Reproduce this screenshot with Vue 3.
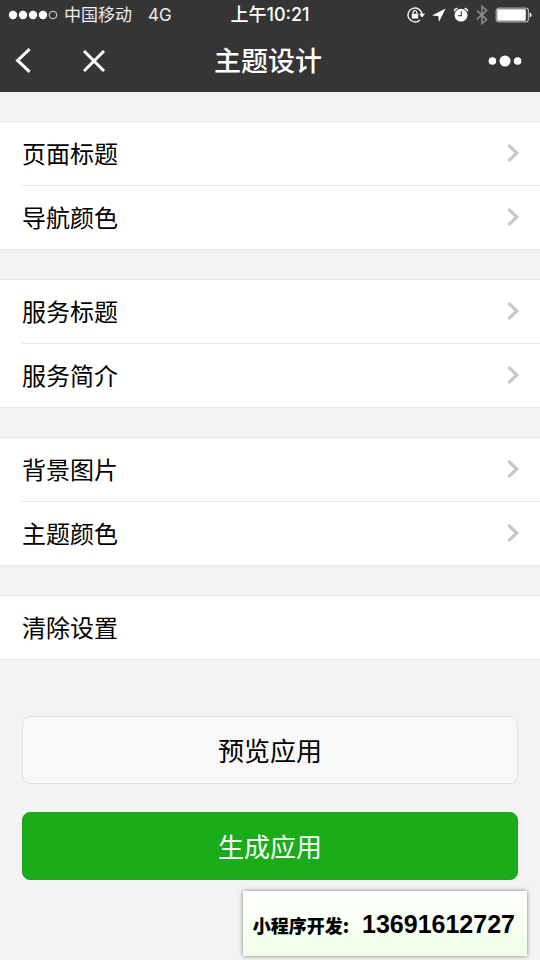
<script setup>
const groups = [
  [
    { label: '页面标题', link: true },
    { label: '导航颜色', link: true },
  ],
  [
    { label: '服务标题', link: true },
    { label: '服务简介', link: true },
  ],
  [
    { label: '背景图片', link: true },
    { label: '主题颜色', link: true },
  ],
  [{ label: '清除设置', link: false }],
]
</script>

<template>
  <div class="page">
    <header class="top">
      <div class="status">
        <div class="carrier">
          <svg class="signal" width="50" height="10" viewBox="0 0 50 10" aria-hidden="true">
            <g fill="#fff">
              <circle cx="5" cy="5" r="4.2" />
              <circle cx="15" cy="5" r="4.2" />
              <circle cx="25" cy="5" r="4.2" />
              <circle cx="35" cy="5" r="4.2" />
            </g>
            <circle cx="45" cy="5" r="3.8" fill="none" stroke="#e4e4e4" stroke-width="0.9" />
          </svg>
          <span>中国移动</span>
          <span class="network">4G</span>
        </div>
        <div class="clock">上午10:21</div>
        <div class="indicators">
          <svg width="18" height="20" viewBox="0 0 18 20" aria-hidden="true">
            <path d="M13 14.9A7 7 0 1 1 15 9.2" fill="none" stroke="#f2f2f2" stroke-width="1.4" />
            <path d="M12.2 8.8H18l-2.9 3.6z" fill="#fff" />
            <path d="M6.1 9.4V7.6a1.9 1.9 0 0 1 3.8 0v1.8" fill="none" stroke="#fff" stroke-width="1.2" />
            <rect x="4.8" y="8.8" width="6.4" height="4.6" rx="0.5" fill="#fff" />
          </svg>
          <svg width="14" height="20" viewBox="0 0 14 20" aria-hidden="true">
            <path d="M13.6 3.4L0 10.6l6.4.4.5 6z" fill="#fff" />
          </svg>
          <svg width="16" height="20" viewBox="0 0 16 20" aria-hidden="true">
            <circle cx="8" cy="10.2" r="6.4" fill="#fff" />
            <path d="M8.3 6.2v4.5H4.8" fill="none" stroke="#353535" stroke-width="1.1" />
            <path d="M1.4 6.4a3.2 3.2 0 0 1 3.2-3M11.4 3.4a3.2 3.2 0 0 1 3.2 3" fill="none" stroke="#f2f2f2" stroke-width="1.5" />
          </svg>
          <svg width="12" height="20" viewBox="0 0 12 20" aria-hidden="true">
            <path d="M1 5.6l9.6 9-4.6 4V1.4l4.6 4L1 14.4" fill="none" stroke="#8c8c8c" stroke-width="1.5" />
          </svg>
          <svg width="37" height="16" viewBox="0 0 37 16" aria-hidden="true">
            <rect x="1.2" y="1.2" width="32.2" height="13.6" rx="2.6" fill="none" stroke="#aaa" stroke-width="1.2" />
            <rect x="2.2" y="2.2" width="28.6" height="11.6" rx="1.2" fill="#fff" />
            <path d="M34.6 5.4q2 .7 2 2.6t-2 2.6z" fill="#fff" />
          </svg>
        </div>
      </div>
      <nav class="bar">
        <div class="nav-left">
          <button class="icon-button" type="button" aria-label="返回">
            <svg width="18" height="28" viewBox="0 0 18 28" aria-hidden="true">
              <path d="M15.6 2.2L3.6 13.4l12 11.4" fill="none" stroke="#fff" stroke-width="3" />
            </svg>
          </button>
          <button class="icon-button" type="button" aria-label="关闭">
            <svg width="24" height="24" viewBox="0 0 24 24" aria-hidden="true">
              <path d="M2 2l20 20M22 2L2 22" fill="none" stroke="#fff" stroke-width="3" />
            </svg>
          </button>
        </div>
        <h1 class="title">主题设计</h1>
        <div class="nav-right">
          <button class="icon-button" type="button" aria-label="更多">
            <svg width="34" height="12" viewBox="0 0 34 12" aria-hidden="true">
              <g fill="#fff">
                <circle cx="4.4" cy="6" r="3.8" />
                <circle cx="17" cy="6" r="5.5" />
                <circle cx="29.6" cy="6" r="3.8" />
              </g>
            </svg>
          </button>
        </div>
      </nav>
    </header>

    <main class="content">
      <ul v-for="(rows, index) in groups" :key="index" class="group">
        <li v-for="row in rows" :key="row.label" class="item">
          <a class="row" href="#">
            <span>{{ row.label }}</span>
            <svg v-if="row.link" width="14" height="20" viewBox="0 0 14 20" aria-hidden="true">
              <path d="M2.4 1.8l8.4 8.2-8.4 8.2" fill="none" stroke="#c7c7cc" stroke-width="3.2" />
            </svg>
          </a>
        </li>
      </ul>
      <div class="actions">
        <button class="action plain" type="button">预览应用</button>
        <button class="action primary" type="button">生成应用</button>
      </div>
    </main>

    <aside class="contact">
      <span class="contact-label">小程序开发:</span>
      <span class="phone">13691612727</span>
    </aside>
  </div>
</template>

<style>
body {
  margin: 0;
  background: #f3f3f3;
}
</style>

<style scoped>
.page {
  position: relative;
  box-sizing: border-box;
  min-height: 100vh;
  background: #f3f3f3;
  color: #000;
  font-family: "Noto Sans CJK SC", sans-serif;
}

.top {
  background: #353535;
  color: #fff;
}

.status,
.bar {
  display: grid;
  grid-template-columns: 1fr auto 1fr;
  align-items: center;
}

.status {
  height: 30px;
  padding: 0 8px;
  font-family: Inter, "Noto Sans CJK SC", sans-serif;
  font-size: 17px;
  line-height: 30px;
}

.carrier {
  display: flex;
  align-items: center;
  gap: 6px;
  color: #eee;
}

.network {
  margin-left: 10px;
}

.clock {
  font-size: 18px;
  font-weight: 500;
}

.indicators {
  display: flex;
  justify-content: flex-end;
  align-items: center;
  gap: 7px;
}

.indicators svg {
  flex: none;
}

.bar {
  height: 62px;
  padding: 0 18px 0 14px;
}

.nav-left {
  display: flex;
  align-items: center;
  gap: 50px;
}

.nav-right {
  display: flex;
  justify-content: flex-end;
}

.icon-button {
  display: flex;
  padding: 0;
  border: 0;
  background: none;
}

.title {
  margin: 0;
  padding-bottom: 2px;
  font-size: 27px;
  font-weight: 500;
  line-height: 60px;
}

.content {
  display: flex;
  flex-direction: column;
  gap: 29px;
  padding: 29px 0 80px;
}

.group {
  margin: 0;
  padding: 0;
  list-style: none;
  background: #fff;
  border-top: 1px solid #e6e6e6;
  border-bottom: 1px solid #e6e6e6;
}

.item {
  margin-left: 22px;
}

.item + .item {
  border-top: 1px solid #e6e6e6;
}

.row {
  display: flex;
  justify-content: space-between;
  align-items: center;
  box-sizing: border-box;
  height: 63px;
  padding: 0 20px 2px 0;
  color: #000;
  font-size: 24px;
  text-decoration: none;
}

.actions {
  display: flex;
  flex-direction: column;
  gap: 28px;
  padding: 27px 22px 0;
}

.action {
  height: 68px;
  padding: 0 0 2px;
  border: 1px solid #e2e2e2;
  border-radius: 8px;
  font-family: inherit;
  font-size: 26px;
}

.plain {
  background: #f8f8f8;
  color: #000;
}

.primary {
  border-color: #1aa51a;
  background: #1aad19;
  color: #fff;
}

.contact {
  position: absolute;
  right: 13px;
  bottom: 4px;
  display: flex;
  align-items: baseline;
  gap: 13px;
  padding: 4px 12px 0 10px;
  background: linear-gradient(#fff, #f2ffe9);
  box-shadow: 0 0 4px rgba(0, 0, 0, 0.5);
  font-weight: 900;
  line-height: 61px;
}

.contact-label {
  font-size: 18px;
}

.phone {
  font-family: "Liberation Sans", Arial, sans-serif;
  font-size: 25px;
  line-height: 1;
}
</style>
